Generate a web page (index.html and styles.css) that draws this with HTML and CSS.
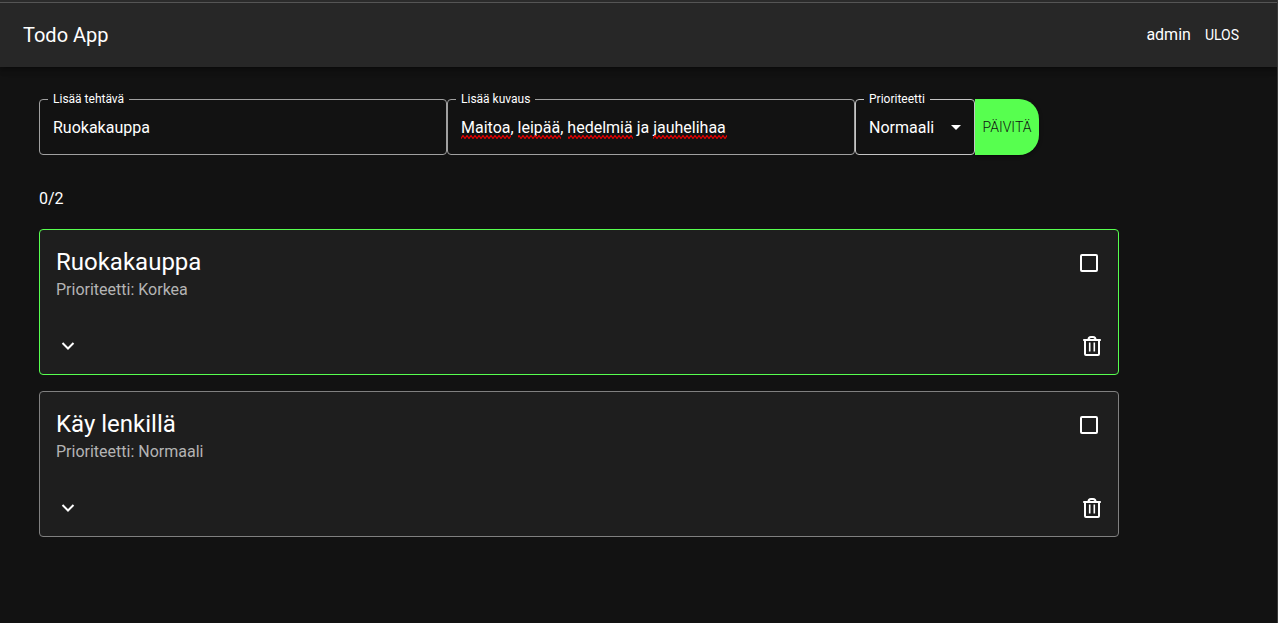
FILE: index.html
```html
<!DOCTYPE html>
<html lang="fi">
<head>
<meta charset="utf-8">
<meta name="viewport" content="width=device-width, initial-scale=1">
<title>Todo App</title>
<link rel="stylesheet" href="styles.css">
</head>
<body>
<header class="app-bar">
  <h1 class="app-title">Todo App</h1>
  <nav class="user-menu">
    <span class="user-name">admin</span>
    <button class="logout" type="button">ULOS</button>
  </nav>
</header>
<main class="content">
  <form class="task-form">
    <div class="field">
      <label class="field-label" for="task">Lisää tehtävä</label>
      <input class="field-control" id="task" type="text" value="Ruokakauppa">
    </div>
    <div class="field">
      <label class="field-label" for="desc">Lisää kuvaus</label>
      <input class="field-control" id="desc" type="text" value="Maitoa, leipää, hedelmiä ja jauhelihaa" spellcheck="false">
      <svg class="spell-marks" width="272" height="4" aria-hidden="true">
        <defs>
          <pattern id="wave" width="4" height="4" patternUnits="userSpaceOnUse">
            <path d="M-2 .5L0 3.500L2 .5L4 3.500L6 .5" fill="none" stroke="#e80000" stroke-width="1.200"/>
          </pattern>
        </defs>
        <path fill="url(#wave)" d="M0 0h50v4H0zM57 0h43v4H57zM107 0h65v4h-65zM192 0h74v4h-74z"/>
      </svg>
    </div>
    <div class="field field-small">
      <label class="field-label" for="priority">Prioriteetti</label>
      <select class="field-control field-select" id="priority">
        <option>Matala</option>
        <option selected>Normaali</option>
        <option>Korkea</option>
      </select>
      <svg class="select-arrow" width="24" height="24" viewBox="0 0 24 24" fill="#fff" aria-hidden="true"><path d="M7 10l5 5 5-5z"/></svg>
    </div>
    <button class="submit" type="submit">PÄIVITÄ</button>
  </form>
  <p class="counter">0/2</p>
  <ul class="task-list">
    <li class="card card-high">
      <div class="card-head">
        <div>
          <h2 class="card-title">Ruokakauppa</h2>
          <p class="card-priority">Prioriteetti: Korkea</p>
        </div>
        <input class="check" type="checkbox" aria-label="Ruokakauppa">
      </div>
      <div class="card-actions">
        <button class="icon-button" type="button" aria-label="Näytä kuvaus">
          <svg width="24" height="24" viewBox="0 0 24 24" fill="none" stroke="#fff" stroke-width="2" aria-hidden="true"><path d="M6.500 9L12 14.500l5.500-5.500"/></svg>
        </button>
        <button class="icon-button icon-delete" type="button" aria-label="Poista">
          <svg width="24" height="24" viewBox="0 0 24 24" fill="none" stroke="#fff" aria-hidden="true">
            <path stroke-width="2" stroke-linejoin="round" d="M5 6v14q0 1 1 1h12q1 0 1-1V6M3.200 6h17.600M8.500 5.500Q8.500 3 11 3h2q2.500 0 2.500 2.500"/>
            <path stroke-width="1.600" d="M9.700 8.500v9M14.300 8.500v9"/>
          </svg>
        </button>
      </div>
    </li>
    <li class="card">
      <div class="card-head">
        <div>
          <h2 class="card-title">Käy lenkillä</h2>
          <p class="card-priority">Prioriteetti: Normaali</p>
        </div>
        <input class="check" type="checkbox" aria-label="Käy lenkillä">
      </div>
      <div class="card-actions">
        <button class="icon-button" type="button" aria-label="Näytä kuvaus">
          <svg width="24" height="24" viewBox="0 0 24 24" fill="none" stroke="#fff" stroke-width="2" aria-hidden="true"><path d="M6.500 9L12 14.500l5.500-5.500"/></svg>
        </button>
        <button class="icon-button icon-delete" type="button" aria-label="Poista">
          <svg width="24" height="24" viewBox="0 0 24 24" fill="none" stroke="#fff" aria-hidden="true">
            <path stroke-width="2" stroke-linejoin="round" d="M5 6v14q0 1 1 1h12q1 0 1-1V6M3.200 6h17.600M8.500 5.500Q8.500 3 11 3h2q2.500 0 2.500 2.500"/>
            <path stroke-width="1.600" d="M9.700 8.500v9M14.300 8.500v9"/>
          </svg>
        </button>
      </div>
    </li>
  </ul>
</main>
</body>
</html>
```
FILE: styles.css
```css
* {
  box-sizing: border-box;
}

body {
  margin: 0;
  min-height: 100vh;
  background: #121212;
  border-right: 1px solid #3a3a3a;
  color: #fff;
  font: 16px/24px Roboto, "Liberation Sans", sans-serif;
}

h1, h2, p, ul {
  margin: 0;
  padding: 0;
}

button {
  border: 0;
  padding: 0;
  background: none;
  color: inherit;
  font: inherit;
  cursor: pointer;
}

.app-bar {
  display: flex;
  align-items: center;
  justify-content: space-between;
  height: 67px;
  padding: 3px 38px 0 23px;
  background: linear-gradient(#2b2b2b 2px, #555 2px, #555 3px, #272727 3px);
  box-shadow: 0 2px 4px -1px rgba(0, 0, 0, 0.2), 0 4px 5px rgba(0, 0, 0, 0.14), 0 1px 10px rgba(0, 0, 0, 0.12);
}

.app-title {
  font-size: 20px;
  font-weight: 400;
  line-height: 32px;
}

.user-menu {
  display: flex;
  align-items: center;
  gap: 14px;
}

.logout {
  font-size: 14px;
}

.content {
  padding: 32px 39px;
}

.task-form {
  display: flex;
  max-width: 1000px;
}

.field {
  position: relative;
  flex: 1;
  height: 56px;
}

.field-small {
  flex: 0 0 120px;
}

.field-label {
  position: absolute;
  top: -7px;
  left: 9px;
  padding: 0 5px;
  background: #121212;
  font-size: 12px;
  line-height: 14px;
}

.field-control {
  display: block;
  width: 100%;
  height: 56px;
  padding: 0 13px;
  border: 1px solid #a0a0a0;
  border-radius: 4px;
  background: transparent;
  color: #fff;
  font: inherit;
  outline: 0;
}

.field-select {
  appearance: none;
  padding-top: 2px;
  border-color: #c4c4c4;
}

.field-select option {
  background: #1e1e1e;
}

.select-arrow {
  position: absolute;
  top: 16px;
  right: 7px;
  pointer-events: none;
}

.spell-marks {
  position: absolute;
  top: 36px;
  left: 14px;
  pointer-events: none;
}

.submit {
  flex: 0 0 64px;
  border-radius: 0 20px 20px 0;
  background: #57ff4f;
  box-shadow: 0 3px 1px -2px rgba(0, 0, 0, 0.2), 0 2px 2px rgba(0, 0, 0, 0.14), 0 1px 5px rgba(0, 0, 0, 0.12);
  color: #121212;
  font-size: 14px;
  font-weight: 300;
}

.counter {
  margin: 32px 0 18px;
}

.task-list {
  display: grid;
  gap: 16px;
  max-width: 1080px;
  list-style: none;
}

.card {
  padding: 16px;
  border: 1px solid #808080;
  border-radius: 4px;
  background: #1e1e1e;
}

.card-high {
  border-color: #57ff4f;
}

.card-head {
  display: flex;
  align-items: flex-start;
  justify-content: space-between;
}

.card-title {
  font-size: 24px;
  font-weight: 400;
  line-height: 32px;
}

.card-priority {
  color: #b4b4b4;
  line-height: 24px;
}

.check {
  appearance: none;
  width: 18px;
  height: 18px;
  margin: 8px 4px 0 0;
  border: 2px solid #fff;
  border-radius: 2px;
}

.check:checked {
  background: #57ff4f;
}

.card-actions {
  display: flex;
  justify-content: space-between;
  margin-top: 32px;
}

.icon-button {
  height: 24px;
}

.icon-delete {
  margin-right: -2px;
}

.icon-button svg {
  display: block;
}
```
